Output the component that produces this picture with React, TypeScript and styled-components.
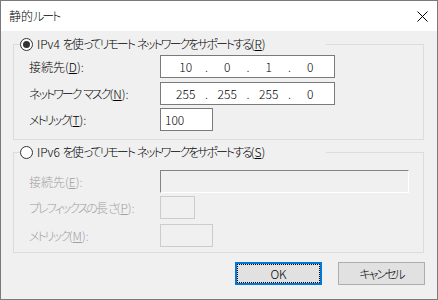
import { FC, Fragment, ReactNode } from "react";
import styled, { createGlobalStyle } from "styled-components";

const GlobalStyle = createGlobalStyle`
  html, body {
    margin: 0;
    padding: 0;
    background: #f0f0f0;
  }
  body {
    font-family: "Noto Sans CJK JP", "Noto Sans", sans-serif;
    font-size: 12px;
    font-weight: 300;
    font-feature-settings: "palt" 1;
    color: #000;
  }
`;

const Window = styled.div`
  width: 438px;
  height: 300px;
  box-sizing: border-box;
  border: 1px solid #7a7a7a;
  background: #f0f0f0;
  display: flex;
  flex-direction: column;
`;

const TitleBar = styled.div`
  height: 30px;
  flex: none;
  background: #fff;
  display: flex;
  align-items: center;
  justify-content: space-between;
  padding: 0 9px 0 8px;
`;

const Title = styled.span`
  line-height: 16px;
`;

const Body = styled.div`
  display: flex;
  flex-direction: column;
  padding: 5px 12px 0 12px;
`;

const Group = styled.fieldset<{ $mt?: number; $pb: number }>`
  margin: ${(p) => p.$mt ?? 0}px 1px 0 0;
  padding: 0 0 ${(p) => p.$pb}px 0;
  min-width: 0;
  border: 1px solid #dcdcdc;
`;

const Legend = styled.legend`
  width: 306px;
  margin-left: 6px;
  padding: 0;
  height: 16px;
  line-height: 16px;
  display: flex;
  align-items: center;
  gap: 4px;
  white-space: nowrap;
`;

const Radio = styled.span<{ $checked?: boolean }>`
  width: 13px;
  height: 13px;
  flex: none;
  box-sizing: border-box;
  border: 1px solid #333;
  border-radius: 50%;
  background: #fff;
  display: flex;
  align-items: center;
  justify-content: center;

  &::after {
    content: "";
    width: 7px;
    height: 7px;
    border-radius: 50%;
    background: #333;
    display: ${(p) => (p.$checked ? "block" : "none")};
  }
`;

const Row = styled.div<{ $mt: number }>`
  display: flex;
  align-items: center;
  height: 23px;
  margin-top: ${(p) => p.$mt}px;
  padding-left: 15px;
`;

const Label = styled.span<{ $disabled?: boolean }>`
  width: 131px;
  flex: none;
  line-height: 16px;
  white-space: nowrap;
  color: ${(p) => (p.$disabled ? "#a0a0a0" : "#000")};
`;

const Kana = styled.span`
  letter-spacing: -2px;
`;

const Box = styled.div<{ $w: number }>`
  width: ${(p) => p.$w}px;
  height: 23px;
  box-sizing: border-box;
  border: 1px solid #7a7a7a;
  background: #fff;
  display: flex;
  align-items: center;
  padding: 0 4px;
`;

const IpBox = styled(Box)`
  padding: 0 7px 0 8px;
`;

const Octet = styled.span`
  flex: 1;
  text-align: center;
`;

const Dot = styled.span`
  width: 8px;
  text-align: center;
`;

const DisabledBox = styled.div<{ $w: number; $sunken?: boolean }>`
  width: ${(p) => p.$w}px;
  height: 23px;
  box-sizing: border-box;
  background: #f0f0f0;
  border: 1px solid #cccccc;
  ${(p) =>
    p.$sunken &&
    `
    border-color: #838383 #ffffff #ffffff #838383;
  `}
`;

const Buttons = styled.div`
  display: flex;
  justify-content: flex-end;
  gap: 16px;
  margin-top: 9px;
`;

const Button = styled.button<{ $default?: boolean }>`
  width: 87px;
  height: 23px;
  box-sizing: border-box;
  font: inherit;
  color: #000;
  background: #e1e1e1;
  border: ${(p) => (p.$default ? "2px solid #0078d7" : "1px solid #adadad")};
  padding: 0;
  position: relative;
  display: flex;
  align-items: center;
  justify-content: center;

  ${(p) =>
    p.$default &&
    `
    &::after {
      content: "";
      position: absolute;
      inset: 0;
      border: 1px dotted #000;
    }
  `}
`;

// Yu Gothic UI sets kana much narrower than Noto; tighten kana runs only
const Jp: FC<{ text: string }> = ({ text }) => (
  <>
    {text.split(/([\u3041-\u30ff]+)/).map((s, i) =>
      /[\u3041-\u30ff]/.test(s) ? <Kana key={i}>{s}</Kana> : <Fragment key={i}>{s}</Fragment>
    )}
  </>
);

const Ip: FC<{ parts: string[] }> = ({ parts }) => (
  <IpBox $w={175}>
    {parts.map((p, i) => (
      <Fragment key={i}>
        {i > 0 && <Dot>.</Dot>}
        <Octet>{p}</Octet>
      </Fragment>
    ))}
  </IpBox>
);

const Mn: FC<{ k: string; text: string; colon?: boolean }> = ({ k, text, colon = true }) => (
  <>
    <Jp text={text} />(<u>{k}</u>){colon ? ":" : ""}
  </>
);

const App: FC = () => {
  return (
    <>
      <GlobalStyle />
      <Window>
        <TitleBar>
          <Title>
            <Jp text="静的ルート" />
          </Title>
          <svg width="11" height="11" viewBox="0 0 11 11">
            <path d="M0.5 0.5 L10.5 10.5 M10.5 0.5 L0.5 10.5" stroke="#000" strokeWidth="1" />
          </svg>
        </TitleBar>
        <Body>
          <Group $pb={8}>
            <Legend>
              <Radio $checked />
              <span>
                <Mn k="R" text="IPv4 を使ってリモート ネットワークをサポートする" colon={false} />
              </span>
            </Legend>
            <Row $mt={3}>
              <Label>
                <Mn k="D" text="接続先" />
              </Label>
              <Ip parts={["10", "0", "1", "0"]} />
            </Row>
            <Row $mt={4}>
              <Label>
                <Mn k="N" text="ネットワーク マスク" />
              </Label>
              <Ip parts={["255", "255", "255", "0"]} />
            </Row>
            <Row $mt={3}>
              <Label>
                <Mn k="T" text="メトリック" />
              </Label>
              <Box $w={53}>100</Box>
            </Row>
          </Group>

          <Group $mt={4} $pb={5}>
            <Legend>
              <Radio />
              <span>
                <Mn k="S" text="IPv6 を使ってリモート ネットワークをサポートする" colon={false} />
              </span>
            </Legend>
            <Row $mt={10}>
              <Label $disabled>
                <Mn k="E" text="接続先" />
              </Label>
              <DisabledBox $w={249} $sunken />
            </Row>
            <Row $mt={3}>
              <Label $disabled>
                <Mn k="P" text="プレフィックスの長さ" />
              </Label>
              <DisabledBox $w={35} />
            </Row>
            <Row $mt={5}>
              <Label $disabled>
                <Mn k="M" text="メトリック" />
              </Label>
              <DisabledBox $w={53} />
            </Row>
          </Group>

          <Buttons>
            <Button $default>OK</Button>
            <Button>
              <Jp text="キャンセル" />
            </Button>
          </Buttons>
        </Body>
      </Window>
    </>
  );
};

export default App;
